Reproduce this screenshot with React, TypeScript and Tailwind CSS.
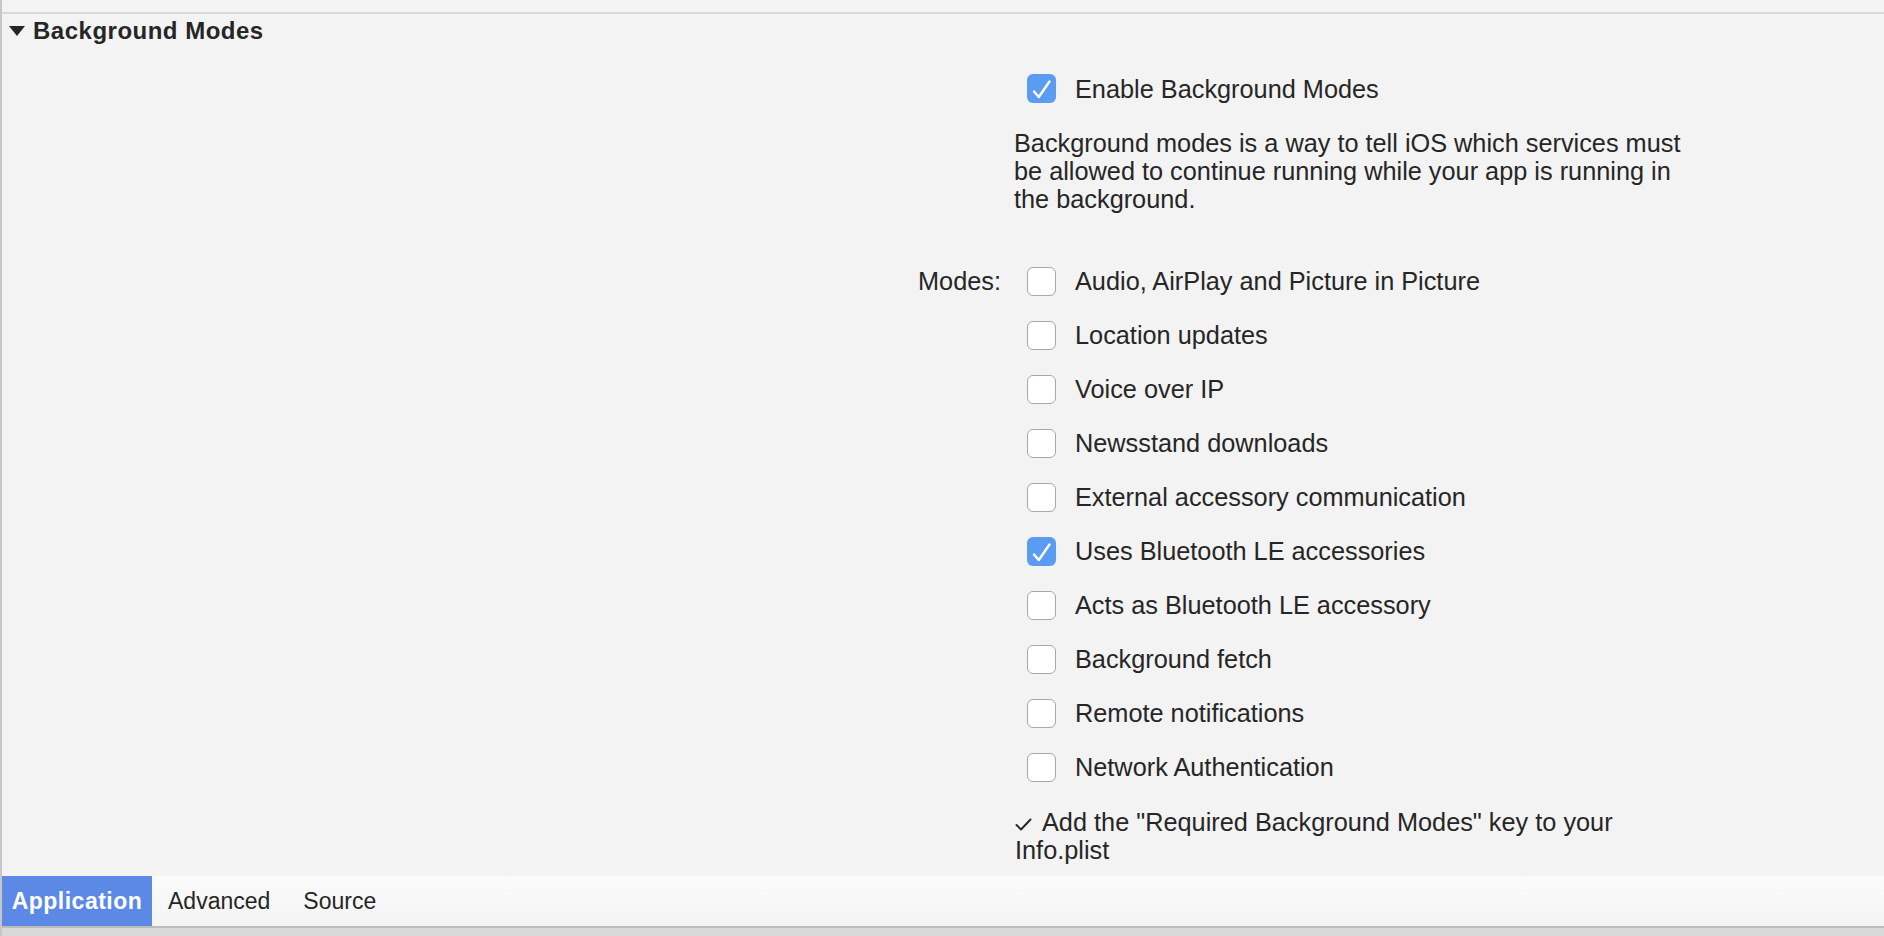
const modes: { label: string; checked: boolean }[] = [
  { label: "Audio, AirPlay and Picture in Picture", checked: false },
  { label: "Location updates", checked: false },
  { label: "Voice over IP", checked: false },
  { label: "Newsstand downloads", checked: false },
  { label: "External accessory communication", checked: false },
  { label: "Uses Bluetooth LE accessories", checked: true },
  { label: "Acts as Bluetooth LE accessory", checked: false },
  { label: "Background fetch", checked: false },
  { label: "Remote notifications", checked: false },
  { label: "Network Authentication", checked: false },
]

function Checkbox({ checked }: { checked: boolean }) {
  if (checked) {
    return (
      <div className="w-[29px] h-[29px] shrink-0 rounded-[6px] bg-[#5b9cf3] flex items-center justify-center">
        <svg width="29" height="29" viewBox="0 0 29 29" fill="none">
          <path d="M7 17.5 L11.8 23 L22.5 7.5" stroke="white" strokeWidth="2.4" strokeLinecap="round" strokeLinejoin="round" />
        </svg>
      </div>
    )
  }
  return <div className="w-[29px] h-[29px] shrink-0 rounded-[6px] bg-white border border-[#a8a8a8]" />
}

export default function App() {
  return (
    <div
      className="h-screen w-full flex flex-col bg-[#f3f3f3] border-l-2 border-[#c6c6c6] text-[#262626] overflow-hidden"
      style={{ fontFamily: '"Liberation Sans", Arial, sans-serif' }}
    >
      <div className="h-[12px] shrink-0" />
      <div className="h-[2px] shrink-0 bg-[#d9d9d9]" />

      {/* section header */}
      <div className="h-[34px] shrink-0 flex items-center pl-[7px] gap-[8px]">
        <svg width="16" height="10" viewBox="0 0 16 10">
          <path d="M0 0 H16 L8 10 Z" fill="#262626" />
        </svg>
        <span className="text-[24px] font-bold tracking-[0.5px] leading-none">Background Modes</span>
      </div>

      <div className="grid grid-cols-[1012px_1fr] text-[25.3px] leading-[28px]">
        {/* enable row */}
        <div />
        <div className="mt-[26px] h-[29px] flex items-center gap-[19px] ml-[13px]">
          <Checkbox checked />
          <span>Enable Background Modes</span>
        </div>

        <div />
        <p className="mt-[26px]">
          Background modes is a way to tell iOS which services must
          <br />
          be allowed to continue running while your app is running in
          <br />
          the background.
        </p>

        {/* modes list */}
        <div className="mt-[41px] h-[54px] flex items-center justify-end pr-[13px]">Modes:</div>
        <div className="mt-[41px] flex flex-col">
          {modes.slice(0, 1).map((m) => (
            <div key={m.label} className="h-[54px] flex items-center gap-[19px] ml-[13px]">
              <Checkbox checked={m.checked} />
              <span>{m.label}</span>
            </div>
          ))}
        </div>
        <div />
        <div className="flex flex-col">
          {modes.slice(1).map((m) => (
            <div key={m.label} className="h-[54px] flex items-center gap-[19px] ml-[13px]">
              <Checkbox checked={m.checked} />
              <span>{m.label}</span>
            </div>
          ))}
        </div>

        <div />
        <p className="mt-[14px] ml-[1px]">
          <svg width="17" height="13" viewBox="0 0 17 13" fill="none" className="inline-block mr-[10px] align-baseline">
            <path d="M1.5 7 L6 11.5 L15.5 1.5" stroke="#262626" strokeWidth="1.9" strokeLinecap="round" strokeLinejoin="round" />
          </svg>
          Add the "Required Background Modes" key to your
          <br />
          Info.plist
        </p>
      </div>

      <div className="flex-1" />

      {/* bottom tabs */}
      <div className="h-[50px] shrink-0 flex items-stretch bg-gradient-to-b from-[#fbfbfb] to-[#f4f4f4] text-[23px]">
        <div className="w-[150px] flex items-center justify-center bg-[#5c89e6] text-white font-bold tracking-[0.5px]">
          Application
        </div>
        <div className="flex items-center px-[16px]">Advanced</div>
        <div className="flex items-center px-[17px]">Source</div>
      </div>
      <div className="h-[10px] shrink-0 border-t-2 border-[#bcbcbc] bg-[#d9d9d9]" />
    </div>
  )
}
